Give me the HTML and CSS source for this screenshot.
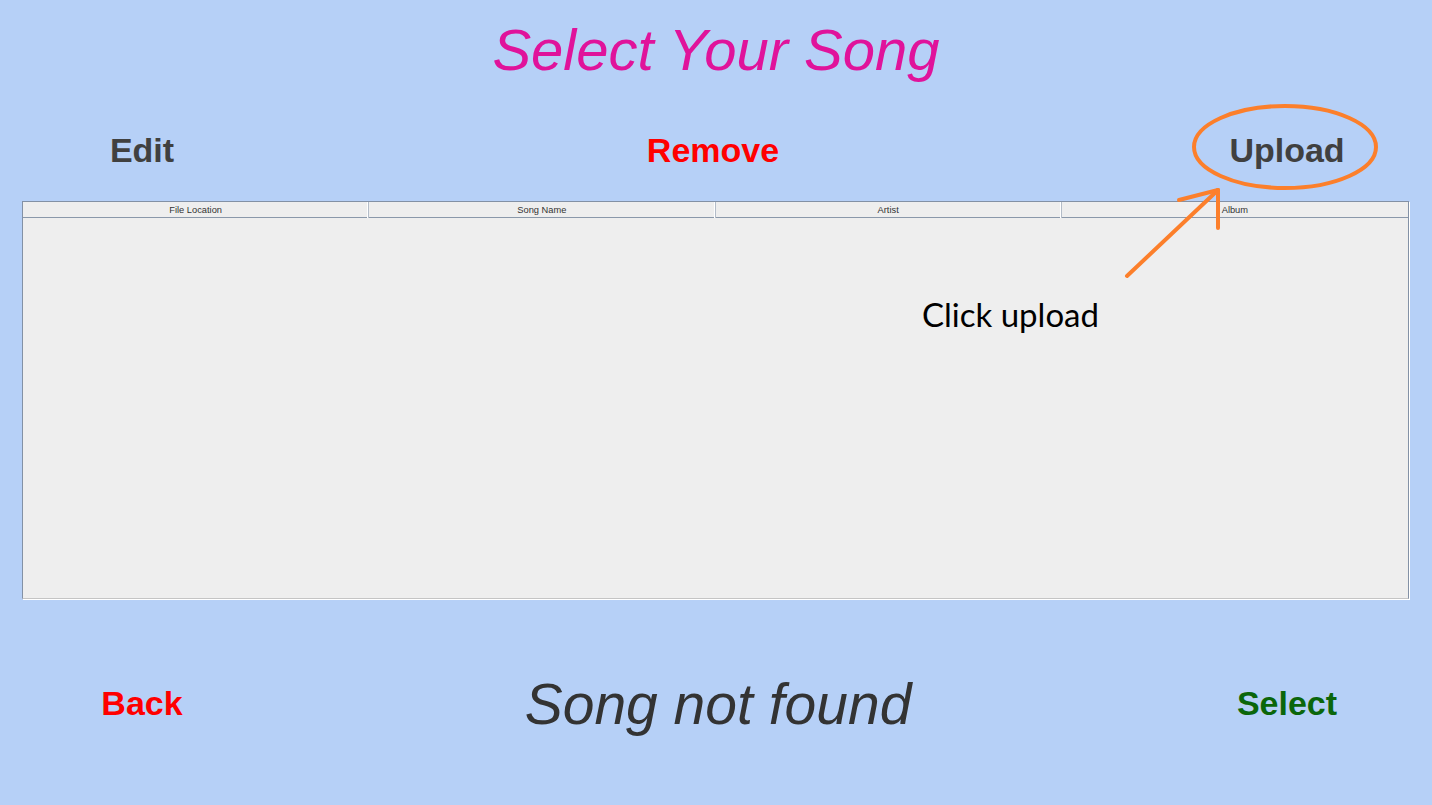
FILE: index.html
```html
<!DOCTYPE html>
<html>
<head>
<meta charset="utf-8">
<link rel="stylesheet" href="styles.css">
</head>
<body>
<div class="page">
  <h1 class="title">Select Your Song</h1>
  <div class="actions">
    <span class="btn btn-dark">Edit</span>
    <span class="btn btn-red">Remove</span>
    <span class="btn btn-dark">Upload</span>
  </div>
  <div class="table-wrap">
    <div class="table-head">
      <div class="th">File Location</div>
      <div class="th">Song Name</div>
      <div class="th">Artist</div>
      <div class="th">Album</div>
    </div>
    <div class="table-body"></div>
  </div>
  <div class="footer">
    <span class="btn btn-red">Back</span>
    <span class="status">Song not found</span>
    <span class="btn btn-green">Select</span>
  </div>
  <div class="note">Click upload</div>
  <svg class="annot" width="1432" height="805" viewBox="0 0 1432 805">
    <ellipse cx="1285" cy="147" rx="91" ry="41" fill="none" stroke="#fc7f2b" stroke-width="4"/>
    <g stroke="#fc7f2b" stroke-width="4" stroke-linecap="round" fill="none">
      <line x1="1127" y1="276" x2="1218" y2="190"/>
      <line x1="1179" y1="200" x2="1218" y2="190"/>
      <line x1="1218" y1="190" x2="1218" y2="228"/>
    </g>
  </svg>
</div>
</body>
</html>
```
FILE: styles.css
```css
html, body {
  margin: 0;
  padding: 0;
  background: #b6d0f7;
}
.page {
  position: relative;
  width: 1432px;
  height: 805px;
  overflow: hidden;
  font-family: "Liberation Sans", Arial, sans-serif;
}
.title {
  margin: 0;
  padding-top: 18px;
  font-size: 58px;
  line-height: 64px;
  font-style: italic;
  font-weight: normal;
  color: #e0139b;
  text-align: center;
}
.actions, .footer {
  display: grid;
  grid-template-columns: 284px 1fr 290px;
  align-items: center;
  justify-items: center;
}
.actions {
  margin-top: 48px;
  height: 40px;
}
.btn {
  font-size: 34px;
  font-weight: bold;
  line-height: 40px;
}
.btn-dark { color: #404040; }
.btn-red { color: #ff0000; }
.btn-green { color: #0b660b; }
.table-wrap {
  margin: 31px 23px 0 22px;
  height: 396px;
  background: #eeeeee;
  border-top: 1px solid #8391a5;
  border-left: 1px solid #8391a5;
  border-right: 1px solid #8391a5;
  border-bottom: 1px solid #c4c4c4;
  box-shadow: 1px 1px 0 #ffffff;
  display: flex;
  flex-direction: column;
}
.table-head {
  display: grid;
  grid-template-columns: repeat(4, 1fr);
  height: 15px;
  border-bottom: 1px solid #8a98aa;
}
.th {
  font-size: 9.3px;
  line-height: 16px;
  color: #333333;
  text-align: center;
  border-right: 1px solid #b3bcc8;
  box-shadow: inset -1px 0 0 #ffffff;
}
.th:last-child {
  border-right: none;
  box-shadow: none;
}
.table-body {
  flex: 1;
}
.footer {
  margin-top: 74px;
  height: 60px;
}
.status {
  font-size: 57px;
  font-style: italic;
  color: #333333;
  line-height: 60px;
  margin-left: 10px;
  position: relative;
  top: 1px;
}
.note {
  position: absolute;
  left: 922px;
  top: 294px;
  font-family: Lato, "Open Sans", sans-serif;
  font-size: 33px;
  color: #000000;
  line-height: 40px;
}
.annot {
  position: absolute;
  left: 0;
  top: 0;
  pointer-events: none;
}
```
